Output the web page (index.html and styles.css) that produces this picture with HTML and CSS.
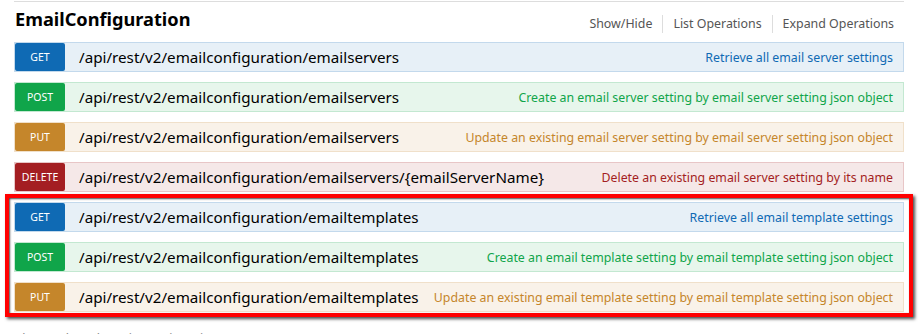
FILE: index.html
```html
<!DOCTYPE html>
<html>
<head>
<meta charset="utf-8">
<link rel="stylesheet" href="styles.css">
</head>
<body>
<div class="resource">
  <div class="topline"></div>
  <div class="heading">
    <h2 class="title">EmailConfiguration</h2>
    <ul class="options">
      <li>Show/Hide</li>
      <li>List Operations</li>
      <li>Expand Operations</li>
    </ul>
  </div>
  <ul class="ops">
    <li class="op get"><span class="method">GET</span><span class="path">/api/rest/v2/emailconfiguration/emailservers</span><span class="desc">Retrieve all email server settings</span></li>
    <li class="op post"><span class="method">POST</span><span class="path">/api/rest/v2/emailconfiguration/emailservers</span><span class="desc">Create an email server setting by email server setting json object</span></li>
    <li class="op put"><span class="method">PUT</span><span class="path">/api/rest/v2/emailconfiguration/emailservers</span><span class="desc">Update an existing email server setting by email server setting json object</span></li>
    <li class="op delete"><span class="method">DELETE</span><span class="path">/api/rest/v2/emailconfiguration/emailservers/{emailServerName}</span><span class="desc">Delete an existing email server setting by its name</span></li>
  </ul>
  <ul class="ops highlight">
    <li class="op get"><span class="method">GET</span><span class="path">/api/rest/v2/emailconfiguration/emailtemplates</span><span class="desc">Retrieve all email template settings</span></li>
    <li class="op post"><span class="method">POST</span><span class="path">/api/rest/v2/emailconfiguration/emailtemplates</span><span class="desc">Create an email template setting by email template setting json object</span></li>
    <li class="op put"><span class="method">PUT</span><span class="path">/api/rest/v2/emailconfiguration/emailtemplates</span><span class="desc">Update an existing email template setting by email template setting json object</span></li>
  </ul>
  <div class="footer">[ base url: /webservice , api version: 2.0.0 ]</div>
</div>
</body>
</html>
```

FILE: styles.css
```css
body {
  margin: 0;
  background: #fff;
  font-family: "Noto Sans", "Open Sans", "DejaVu Sans", sans-serif;
}

.resource {
  width: 890px;
  padding-left: 14px;
}

.topline {
  margin-top: 1px;
  border-top: 1px solid #ddd;
}

.heading {
  display: flex;
  justify-content: space-between;
  align-items: flex-start;
  height: 40px;
}

.title {
  margin: 4px 0 0 1px;
  font-size: 18.2px;
  line-height: 27px;
  font-weight: bold;
  color: #000;
}

.options {
  display: flex;
  list-style: none;
  margin: 13px 0 0;
  padding: 0;
  font-size: 12.4px;
  color: #555;
}

.options li {
  padding: 0 10px;
  border-right: 1px solid #ddd;
  line-height: 18px;
}

.options li:last-child {
  border-right: none;
}

.ops {
  list-style: none;
  margin: 0;
  padding: 0;
  display: flex;
  flex-direction: column;
  gap: 10px;
}

.op {
  display: flex;
  align-items: center;
  height: 28px;
  border: 1px solid;
}

.method {
  flex: none;
  align-self: stretch;
  width: 50px;
  border-radius: 2px;
  color: #fff;
  font-size: 10.5px;
  line-height: 29px;
  text-align: center;
}

.path {
  flex: none;
  margin-left: 14px;
  font-size: 15.2px;
  color: #000;
  white-space: nowrap;
}

.desc {
  margin-left: auto;
  padding-right: 10px;
  font-size: 12.35px;
  white-space: nowrap;
}

.get { background: #e7f0f7; border-color: #c3d9ec; }
.get .method { background: #0f6ab4; }
.get .desc { color: #0f6ab4; }

.post { background: #e7f6ec; border-color: #c3e8d1; }
.post .method { background: #10a54a; }
.post .desc { color: #10a54a; }

.put { background: #f9f2e9; border-color: #f0e0ca; }
.put .method { background: #c5862b; }
.put .desc { color: #c5862b; }

.delete { background: #f5e8e8; border-color: #e8c6c7; }
.delete .method { background: #a41e22; }
.delete .desc { color: #a41e22; }

.highlight {
  margin: 2px -9px 0;
  padding: 4px 5px 1px;
  border: 4px solid #f00;
  box-shadow: 2px 2px 3px rgba(0, 0, 0, 0.7), inset 1px 1px 2px rgba(0, 0, 0, 0.7);
}

.footer {
  margin-top: 13px;
  padding-left: 1px;
  font-size: 12.4px;
  color: #888;
}
```
